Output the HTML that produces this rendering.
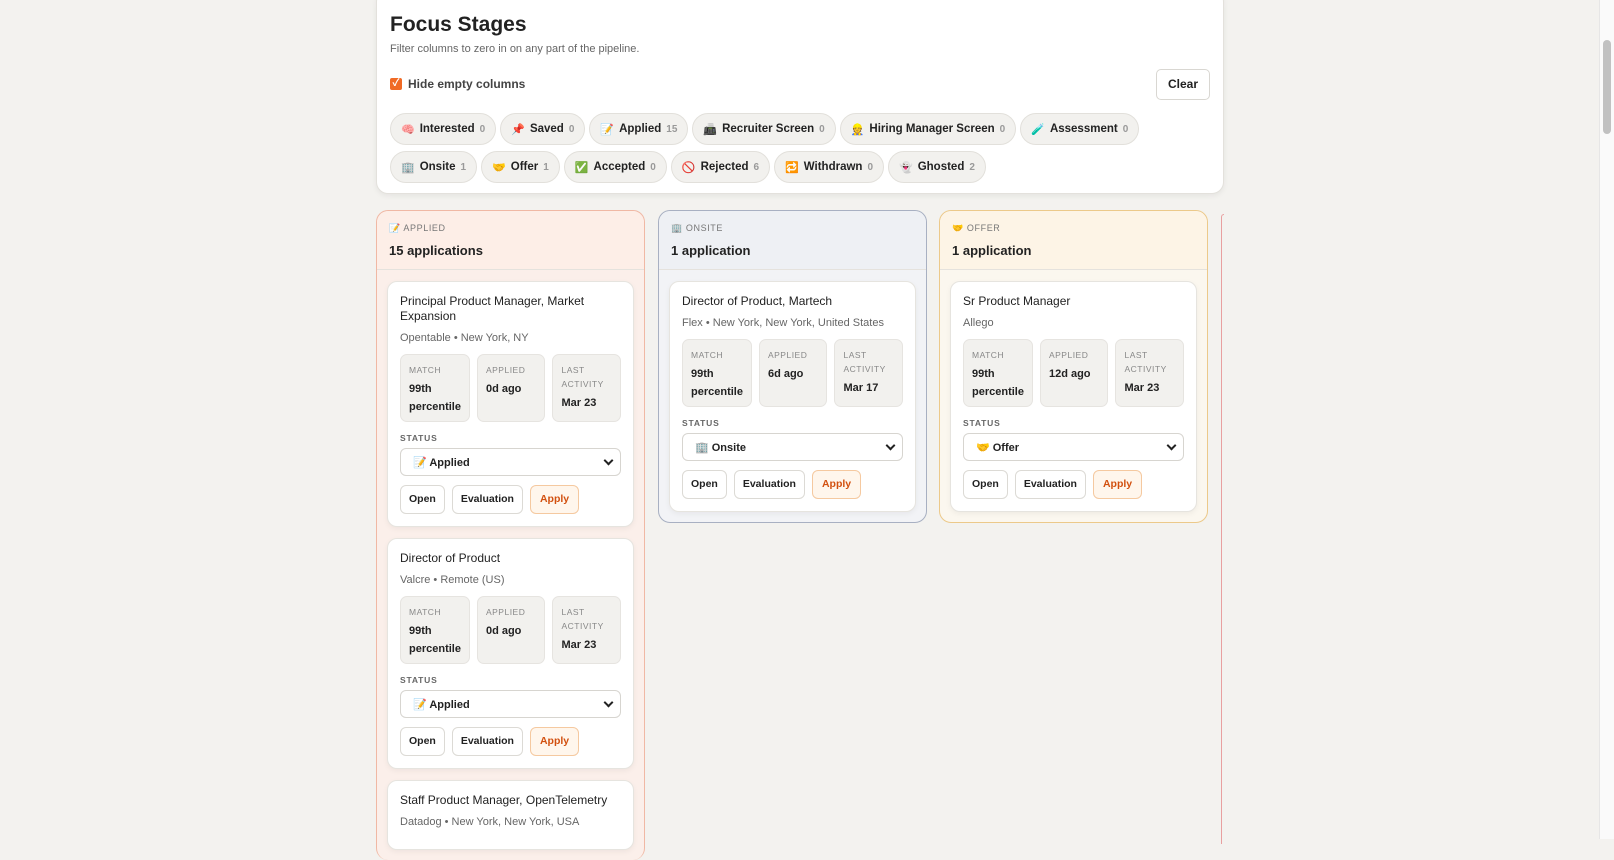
<!DOCTYPE html>
<html><head><meta charset="utf-8"><style>
*{box-sizing:border-box;margin:0;padding:0}
body{width:1614px;height:839px;overflow:hidden;background:#f3f2ef;font-family:"Liberation Sans","Noto Sans CJK JP",sans-serif;color:#222;position:relative}
.panel{position:absolute;left:376px;top:-10px;width:848px;height:204px;background:#fff;border:1px solid #e3e1dc;border-radius:12px;box-shadow:0 2px 6px rgba(0,0,0,.06);padding:22px 13px}
h1{font-size:21px;font-weight:600;margin-top:0}
.sub{font-size:11px;color:#666;margin-top:6px}
.hide{display:flex;align-items:center;font-size:12px;color:#444;margin-top:22px;font-weight:600}
.cb{width:12px;height:12px;background:#f06a25;border-radius:2px;margin-right:6px;color:#fff;font-size:10px;line-height:12px;text-align:center}
.clear{position:absolute;right:13px;top:78px;width:54px;height:31px;border:1px solid #d9d7d2;border-radius:5px;font-size:12px;font-weight:700;text-align:center;line-height:29px}
.chips{position:absolute;left:13px;top:122px;width:800px}
.chip{display:inline-flex;align-items:center;height:32px;padding:0 10px;background:#f2f1ee;border:1px solid #e2e0db;border-radius:16px;font-size:11.5px;font-weight:600;margin:0 4px 6px 0;color:#222}
.chip i{font-style:normal;margin-right:5px;font-size:11px}
.chip b{color:#999;font-size:10px;margin-left:5px}
.col{position:absolute;top:210px;width:269px;border-radius:12px;border:1px solid}
.ch{height:59px;border-bottom:1px solid #e5e2dd;padding:12px 12px}
.ch .t{font-size:9px;letter-spacing:.6px;color:#777}
.ch .n{font-size:13px;font-weight:600;margin-top:9px}
.card{background:#fff;border:1px solid #e6e4df;border-radius:10px;margin:11px 10px 0;padding:12px 12px 12px;box-shadow:0 2px 6px rgba(0,0,0,.05)}
.ti{font-size:12px;line-height:15px;color:#222}
.co{font-size:11px;color:#666;margin-top:8px}
.stats{display:flex;gap:7px;margin-top:10px}
.st{flex:1;background:#f2f1ee;border:1px solid #e6e4e0;border-radius:7px;padding:8px 8px;height:68px}
.st .l{font-size:8.5px;letter-spacing:.5px;color:#888;line-height:14px}
.st .v{font-size:11px;font-weight:700;line-height:18px;margin-top:3px}
.sl{font-size:8.5px;letter-spacing:.8px;color:#666;font-weight:600;margin-top:11px}
.sel{height:28px;border:1px solid #d7d5d0;border-radius:6px;margin-top:5px;font-size:11px;font-weight:600;padding:0 12px;display:flex;align-items:center;position:relative}
.sel:after{content:"";position:absolute;right:8px;top:8px;width:5px;height:5px;border-right:2px solid #222;border-bottom:2px solid #222;transform:rotate(45deg)}
.btns{display:flex;gap:7px;margin-top:9px}
.btn{height:29px;border:1px solid #dcdad5;border-radius:6px;font-size:10.5px;font-weight:700;padding:0 8px;line-height:27px;background:#fff}
.ap{background:#fff6ec;border-color:#f5c9a0;color:#d2500f;padding:0 9px}
.sb{position:absolute;left:1599px;top:0;width:15px;height:839px;background:#fafafa;border-left:1px solid #e6e6e6}
.sb div{position:absolute;left:3px;top:40px;width:8px;height:94px;background:#c1c1c1;border-radius:4px}
</style></head><body>
<div class="panel">
<h1>Focus Stages</h1>
<div class="sub">Filter columns to zero in on any part of the pipeline.</div>
<div class="hide"><span class="cb">✓</span>Hide empty columns</div>
<div class="clear">Clear</div>
<div class="chips">
<span class="chip"><i>🧠</i>Interested<b>0</b></span><span class="chip"><i>📌</i>Saved<b>0</b></span><span class="chip"><i>📝</i>Applied<b>15</b></span><span class="chip"><i>📠</i>Recruiter Screen<b>0</b></span><span class="chip"><i>👷</i>Hiring Manager Screen<b>0</b></span><span class="chip"><i>🧪</i>Assessment<b>0</b></span><br>
<span class="chip"><i>🏢</i>Onsite<b>1</b></span><span class="chip"><i>🤝</i>Offer<b>1</b></span><span class="chip"><i>✅</i>Accepted<b>0</b></span><span class="chip"><i>🚫</i>Rejected<b>6</b></span><span class="chip"><i>🔁</i>Withdrawn<b>0</b></span><span class="chip"><i>👻</i>Ghosted<b>2</b></span>
</div></div>

<div class="col" style="left:376px;height:650px;border-color:#f0b8a4;background:#fbefea;border-bottom:none">
<div class="ch" style="background:#fdeee7;border-radius:12px 12px 0 0"><div class="t">📝 APPLIED</div><div class="n">15 applications</div></div>
<div class="card"><div class="ti">Principal Product Manager, Market Expansion</div><div class="co">Opentable • New York, NY</div>
<div class="stats"><div class="st"><div class="l">MATCH</div><div class="v">99th percentile</div></div><div class="st"><div class="l">APPLIED</div><div class="v">0d ago</div></div><div class="st"><div class="l">LAST ACTIVITY</div><div class="v">Mar 23</div></div></div>
<div class="sl">STATUS</div><div class="sel">📝 Applied</div>
<div class="btns"><span class="btn">Open</span><span class="btn">Evaluation</span><span class="btn ap">Apply</span></div></div>
<div class="card"><div class="ti">Director of Product</div><div class="co">Valcre • Remote (US)</div>
<div class="stats"><div class="st"><div class="l">MATCH</div><div class="v">99th percentile</div></div><div class="st"><div class="l">APPLIED</div><div class="v">0d ago</div></div><div class="st"><div class="l">LAST ACTIVITY</div><div class="v">Mar 23</div></div></div>
<div class="sl">STATUS</div><div class="sel">📝 Applied</div>
<div class="btns"><span class="btn">Open</span><span class="btn">Evaluation</span><span class="btn ap">Apply</span></div></div>
<div class="card" style="height:70px"><div class="ti">Staff Product Manager, OpenTelemetry</div><div class="co">Datadog • New York, New York, USA</div></div>
</div>

<div class="col" style="left:658px;height:313px;border-color:#a8b0c2;background:#f2f3f6">
<div class="ch" style="background:#eef0f4;border-radius:12px 12px 0 0"><div class="t">🏢 ONSITE</div><div class="n">1 application</div></div>
<div class="card"><div class="ti">Director of Product, Martech</div><div class="co">Flex • New York, New York, United States</div>
<div class="stats"><div class="st"><div class="l">MATCH</div><div class="v">99th percentile</div></div><div class="st"><div class="l">APPLIED</div><div class="v">6d ago</div></div><div class="st"><div class="l">LAST ACTIVITY</div><div class="v">Mar 17</div></div></div>
<div class="sl">STATUS</div><div class="sel">🏢 Onsite</div>
<div class="btns"><span class="btn">Open</span><span class="btn">Evaluation</span><span class="btn ap">Apply</span></div></div>
</div>

<div class="col" style="left:939px;height:313px;border-color:#ecc98a;background:#fbf7ef">
<div class="ch" style="background:#fdf4e6;border-radius:12px 12px 0 0"><div class="t">🤝 OFFER</div><div class="n">1 application</div></div>
<div class="card"><div class="ti">Sr Product Manager</div><div class="co">Allego</div>
<div class="stats"><div class="st"><div class="l">MATCH</div><div class="v">99th percentile</div></div><div class="st"><div class="l">APPLIED</div><div class="v">12d ago</div></div><div class="st"><div class="l">LAST ACTIVITY</div><div class="v">Mar 23</div></div></div>
<div class="sl">STATUS</div><div class="sel">🤝 Offer</div>
<div class="btns"><span class="btn">Open</span><span class="btn">Evaluation</span><span class="btn ap">Apply</span></div></div>
</div>

<div style="position:absolute;left:1221px;top:214px;width:3px;height:630px;border-left:1px solid #e8a0a0;border-top:1px solid #e8a0a0;border-radius:6px 0 0 0"></div>
<div class="sb"><div></div></div>
</body></html>
